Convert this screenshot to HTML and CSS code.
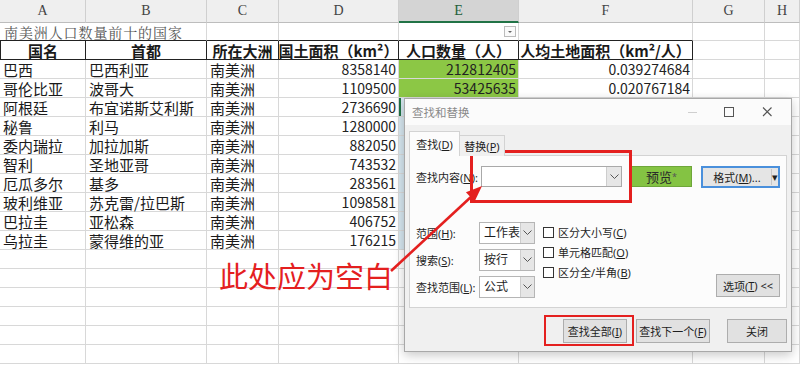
FILE: index.html
```html
<!DOCTYPE html>
<html lang="zh-CN">
<head>
  <meta charset="UTF-8" />
  <title>查找和替换</title>
  <link rel="stylesheet" href="styles.css">
</head>
<body>
  <div class="sheet">
    <div class="row colhead">
      <div class="c">A</div><div class="c">B</div><div class="c">C</div><div class="c">D</div>
      <div class="c on">E</div><div class="c">F</div><div class="c">G</div><div class="c">H</div>
    </div>

    <div class="row title">
      <div class="c span2 bb">南美洲人口数量前十的国家</div>
      <div class="c bb"></div>
      <div class="c bb"></div>
      <div class="c bb filter"><span class="fbtn"></span></div>
      <div class="c bb"></div>
      <div class="c"></div>
      <div class="c"></div>
    </div>

    <div class="row head">
      <div class="c hb first">国名</div>
      <div class="c hb">首都</div>
      <div class="c hb">所在大洲</div>
      <div class="c hb">国土面积（km²）</div>
      <div class="c hb">人口数量（人）</div>
      <div class="c hb">人均土地面积（km²/人）</div>
      <div class="c"></div>
      <div class="c"></div>
    </div>

    <div class="row">
      <div class="c">巴西</div><div class="c">巴西利亚</div><div class="c">南美洲</div>
      <div class="c n">8358140</div><div class="c n green">212812405</div><div class="c n">0.039274684</div>
      <div class="c"></div><div class="c"></div>
    </div>
    <div class="row">
      <div class="c">哥伦比亚</div><div class="c">波哥大</div><div class="c">南美洲</div>
      <div class="c n">1109500</div><div class="c n green">53425635</div><div class="c n">0.020767184</div>
      <div class="c"></div><div class="c"></div>
    </div>
    <div class="row">
      <div class="c">阿根廷</div><div class="c">布宜诺斯艾利斯</div><div class="c">南美洲</div>
      <div class="c n">2736690</div><div class="c sel act"></div><div class="c"></div>
      <div class="c"></div><div class="c"></div>
    </div>
    <div class="row">
      <div class="c">秘鲁</div><div class="c">利马</div><div class="c">南美洲</div>
      <div class="c n">1280000</div><div class="c sel"></div><div class="c"></div>
      <div class="c"></div><div class="c"></div>
    </div>
    <div class="row">
      <div class="c">委内瑞拉</div><div class="c">加拉加斯</div><div class="c">南美洲</div>
      <div class="c n">882050</div><div class="c sel"></div><div class="c"></div>
      <div class="c"></div><div class="c"></div>
    </div>
    <div class="row">
      <div class="c">智利</div><div class="c">圣地亚哥</div><div class="c">南美洲</div>
      <div class="c n">743532</div><div class="c sel"></div><div class="c"></div>
      <div class="c"></div><div class="c"></div>
    </div>
    <div class="row">
      <div class="c">厄瓜多尔</div><div class="c">基多</div><div class="c">南美洲</div>
      <div class="c n">283561</div><div class="c sel"></div><div class="c"></div>
      <div class="c"></div><div class="c"></div>
    </div>
    <div class="row">
      <div class="c">玻利维亚</div><div class="c">苏克雷/拉巴斯</div><div class="c">南美洲</div>
      <div class="c n">1098581</div><div class="c sel"></div><div class="c"></div>
      <div class="c"></div><div class="c"></div>
    </div>
    <div class="row">
      <div class="c">巴拉圭</div><div class="c">亚松森</div><div class="c">南美洲</div>
      <div class="c n">406752</div><div class="c sel"></div><div class="c"></div>
      <div class="c"></div><div class="c"></div>
    </div>
    <div class="row">
      <div class="c">乌拉圭</div><div class="c">蒙得维的亚</div><div class="c">南美洲</div>
      <div class="c n">176215</div><div class="c sel"></div><div class="c"></div>
      <div class="c"></div><div class="c"></div>
    </div>

    <div class="row"><div class="c"></div><div class="c"></div><div class="c"></div><div class="c"></div><div class="c"></div><div class="c"></div><div class="c"></div><div class="c"></div></div>
    <div class="row"><div class="c"></div><div class="c"></div><div class="c"></div><div class="c"></div><div class="c"></div><div class="c"></div><div class="c"></div><div class="c"></div></div>
    <div class="row"><div class="c"></div><div class="c"></div><div class="c"></div><div class="c"></div><div class="c"></div><div class="c"></div><div class="c"></div><div class="c"></div></div>
    <div class="row"><div class="c"></div><div class="c"></div><div class="c"></div><div class="c"></div><div class="c"></div><div class="c"></div><div class="c"></div><div class="c"></div></div>
    <div class="row"><div class="c"></div><div class="c"></div><div class="c"></div><div class="c"></div><div class="c"></div><div class="c"></div><div class="c"></div><div class="c"></div></div>
    <div class="row"><div class="c"></div><div class="c"></div><div class="c"></div><div class="c"></div><div class="c"></div><div class="c"></div><div class="c"></div><div class="c"></div></div>
  </div>

  <!-- find & replace dialog -->
  <div class="dialog">
    <div class="titlebar">
      <span class="dtitle">查找和替换</span>
      <svg class="wbtn" width="120" height="12" viewBox="0 0 120 12">
        <line x1="27" y1="6.5" x2="36" y2="6.5" stroke="#cfcfcf" stroke-width="1"/>
        <rect x="63.5" y="1.5" width="9" height="9" fill="none" stroke="#555" stroke-width="1"/>
        <path d="M102 1.5 L110.5 10 M110.5 1.5 L102 10" stroke="#555" stroke-width="1.1"/>
      </svg>
    </div>
    <div class="dbody">
      <div class="tabs">
        <div class="tab active">查找(<u>D</u>)</div>
        <div class="tab">替换(<u>P</u>)</div>
      </div>
      <div class="panel">
        <div class="findrow">
          <span class="lbl">查找内容(<u>N</u>):</span>
          <div class="input">
            <span class="arrow"><svg width="9" height="6" viewBox="0 0 9 6"><path d="M0.5 0.5 L4.5 4.5 L8.5 0.5" fill="none" stroke="#555"/></svg></span>
          </div>
          <div class="btn preview">预览<sup>*</sup></div>
          <div class="btn format"><span class="ftxt">格式(<u>M</u>)...</span><span class="fdrop">▾</span></div>
        </div>

        <div class="opts">
          <div class="selgrid">
            <span class="lbl">范围(<u>H</u>):</span>
            <div class="select">工作表<span class="arrow"><svg width="9" height="6" viewBox="0 0 9 6"><path d="M0.5 0.5 L4.5 4.5 L8.5 0.5" fill="none" stroke="#555"/></svg></span></div>
            <span class="lbl">搜索(<u>S</u>):</span>
            <div class="select">按行<span class="arrow"><svg width="9" height="6" viewBox="0 0 9 6"><path d="M0.5 0.5 L4.5 4.5 L8.5 0.5" fill="none" stroke="#555"/></svg></span></div>
            <span class="lbl">查找范围(<u>L</u>):</span>
            <div class="select">公式<span class="arrow"><svg width="9" height="6" viewBox="0 0 9 6"><path d="M0.5 0.5 L4.5 4.5 L8.5 0.5" fill="none" stroke="#555"/></svg></span></div>
          </div>
          <div class="checks">
            <label class="chk"><span class="box"></span>区分大小写(<u>C</u>)</label>
            <label class="chk"><span class="box"></span>单元格匹配(<u>O</u>)</label>
            <label class="chk"><span class="box"></span>区分全/半角(<u>B</u>)</label>
          </div>
          <div class="spacer"></div>
          <div class="btn optbtn">选项(<u>T</u>) &lt;&lt;</div>
        </div>
      </div>

      <div class="footer">
        <div class="btn findall">查找全部(<u>I</u>)</div>
        <div class="btn findnext">查找下一个(<u>F</u>)</div>
        <div class="btn close">关闭</div>
      </div>
    </div>
  </div>

  <!-- red annotations -->
  <div class="mark mark-input"></div>
  <div class="mark mark-findall"></div>
  <div class="note">此处应为空白</div>
  <svg class="arrow-svg" width="800" height="365" viewBox="0 0 800 365">
    <line x1="391" y1="271" x2="472" y2="196" stroke="#e4201f" stroke-width="2.6"/>
    <polygon points="482,186 474.6,201.6 465.9,192.3" fill="#e4201f"/>
  </svg>
</body>
</html>
```

FILE: styles.css
```css
body {
  margin: 0;
  width: 800px;
  height: 365px;
  overflow: hidden;
  background: #fff;
  font-family: "Noto Sans CJK SC", sans-serif;
  color: #1a1a1a;
  position: relative;
}

/* spreadsheet */

.sheet {
  width: 800px;
}

.row {
  display: grid;
  grid-template-columns: 86px 121px 72px 120px 120px 174px 72px 1fr;
  height: 19px;
}

.c {
  box-sizing: border-box;
  border-right: 1px solid #d8d8d8;
  border-bottom: 1px solid #d8d8d8;
  display: flex;
  align-items: center;
  padding: 0 3px;
  font-size: 15px;
  white-space: nowrap;
  line-height: 1;
}

.c.n {
  justify-content: flex-end;
  padding-right: 2px;
  font-size: 14px;
  color: #222;
}

.colhead {
  height: 23px;
}

.colhead .c {
  background: #efefef;
  border-right-color: #cfcfcf;
  border-bottom-color: #bdbdbd;
  justify-content: center;
  font-family: "Liberation Serif", serif;
  font-size: 14px;
  color: #444;
}

.colhead .c.on {
  background: #d4d4d4;
  border-bottom: 2px solid #217346;
  color: #1f5f3a;
}

.title {
  height: 18px;
}

.title .c {
  color: #555;
  font-family: "Noto Serif CJK SC", "Noto Sans CJK SC", serif;
  font-size: 14px;
  letter-spacing: 0.9px;
  padding-left: 4px;
}

.span2 {
  grid-column: span 2;
}

.c.bb {
  border-bottom-color: #222;
}

.filter {
  justify-content: flex-end;
  padding-right: 2px;
}

.fbtn {
  width: 10px;
  height: 9px;
  border: 1px solid #bcbcbc;
  background: #fafafa;
  position: relative;
}

.fbtn::after {
  content: "";
  position: absolute;
  left: 3px;
  top: 4px;
  border-left: 2px solid transparent;
  border-right: 2px solid transparent;
  border-top: 2px solid #666;
}

.head .c.hb {
  border-right: 1px solid #222;
  border-bottom: 1px solid #222;
  justify-content: center;
  font-weight: bold;
  padding: 0;
}

.head .c.first {
  border-left: 1px solid #222;
}

.c.green {
  background: #8cc745;
}

.c.sel {
  background: #d6e6ef;
}

.c.act {
  box-shadow: inset 2px 0 0 #217346;
}

/* dialog */

.dialog {
  position: absolute;
  left: 404px;
  top: 98px;
  width: 388px;
  height: 254px;
  box-sizing: border-box;
  background: #f0f0f0;
  border: 1px solid #a8a8a8;
  box-shadow: 0 3px 10px rgba(0, 0, 0, 0.22);
  font-family: "Noto Sans", "Noto Sans CJK SC", sans-serif;
  font-size: 11px;
  color: #1e1e1e;
  white-space: nowrap;
}

.titlebar {
  height: 26px;
  background: #fbfbfb;
  display: flex;
  align-items: center;
  justify-content: space-between;
  padding-left: 7px;
}

.dtitle {
  color: #8a8a8a;
  font-size: 11.5px;
}

.wbtn {
  margin-right: 10px;
}

.dbody {
  padding: 0 4px;
}

.tabs {
  display: flex;
  align-items: flex-end;
  height: 25px;
  margin-top: 6px;
  margin-bottom: -1px;
  position: relative;
  z-index: 1;
}

.tab {
  box-sizing: border-box;
  height: 21px;
  width: 45px;
  border: 1px solid #d3d3d3;
  border-left: none;
  border-bottom: none;
  display: flex;
  align-items: center;
  justify-content: center;
  background: #f0f0f0;
}

.tab.active {
  height: 25px;
  width: 51px;
  border-left: 1px solid #d3d3d3;
  background: #fcfcfc;
}

.panel {
  box-sizing: border-box;
  height: 153px;
  border: 1px solid #d3d3d3;
  background: #fcfcfc;
  padding: 10px 6px 9px 6px;
}

.findrow {
  display: flex;
  align-items: center;
  height: 21px;
}

.findrow .lbl {
  flex: none;
  margin-right: 3px;
}

.input {
  box-sizing: border-box;
  flex: 1;
  height: 21px;
  border: 1px solid #a9a9a9;
  background: #fff;
  display: flex;
  justify-content: flex-end;
}

.arrow {
  width: 14px;
  background: #e6e6e6;
  border-left: 1px solid #cdcdcd;
  display: flex;
  align-items: center;
  justify-content: center;
}

.btn {
  box-sizing: border-box;
  display: flex;
  align-items: center;
  justify-content: center;
  border: 1px solid #adadad;
  background: #e1e1e1;
  white-space: nowrap;
}

.preview {
  flex: none;
  width: 61px;
  height: 21px;
  margin-left: 9px;
  background: #84c343;
  border-color: #6ea63a;
  font-size: 13px;
  color: #2a2a2a;
}

.preview sup {
  font-size: 9px;
  color: #555;
}

.format {
  flex: none;
  width: 79px;
  height: 22px;
  margin-left: 9px;
  border: 2px solid #4a90dc;
  background: #e5e5e5;
  justify-content: flex-start;
}

.ftxt {
  width: 68px;
  text-align: center;
  border-right: 1px solid #c6c6c6;
}

.fdrop {
  flex: 1;
  text-align: center;
  font-size: 11px;
}

.opts {
  display: flex;
  margin-top: 35px;
  height: 76px;
}

.selgrid {
  display: grid;
  grid-template-columns: 63px 56px;
  grid-auto-rows: 22px;
  row-gap: 5px;
  align-items: center;
}

.select {
  box-sizing: border-box;
  height: 22px;
  border: 1px solid #b5b5b5;
  background: #fff;
  display: flex;
  align-items: stretch;
  justify-content: space-between;
  padding-left: 4px;
  line-height: 20px;
  font-size: 12px;
}

.select .arrow {
  width: 13px;
}

.checks {
  margin-left: 8px;
  display: flex;
  flex-direction: column;
}

.chk {
  height: 20px;
  display: flex;
  align-items: center;
}

.box {
  width: 9px;
  height: 9px;
  border: 1px solid #333;
  background: #fff;
  margin-right: 4px;
}

.spacer {
  flex: 1;
}

.optbtn {
  align-self: flex-end;
  width: 64px;
  height: 23px;
  margin-bottom: 1px;
}

.footer {
  display: flex;
  justify-content: flex-end;
  margin-top: 11px;
}

.footer .btn {
  height: 24px;
}

.findall {
  width: 64px;
  margin-right: 9px;
}

.findnext {
  width: 74px;
  margin-right: 17px;
}

.close {
  width: 60px;
}

/* red annotations */

.mark {
  position: absolute;
  box-sizing: border-box;
  border: 3px solid #e4201f;
}

.mark-input {
  left: 470px;
  top: 150px;
  width: 162px;
  height: 53px;
}

.mark-findall {
  left: 544px;
  top: 315px;
  width: 90px;
  height: 31px;
  border-width: 2.5px;
}

.note {
  position: absolute;
  left: 219px;
  top: 258px;
  font-size: 29px;
  line-height: 34px;
  color: #e4201f;
}

.arrow-svg {
  position: absolute;
  left: 0;
  top: 0;
  pointer-events: none;
}
```
